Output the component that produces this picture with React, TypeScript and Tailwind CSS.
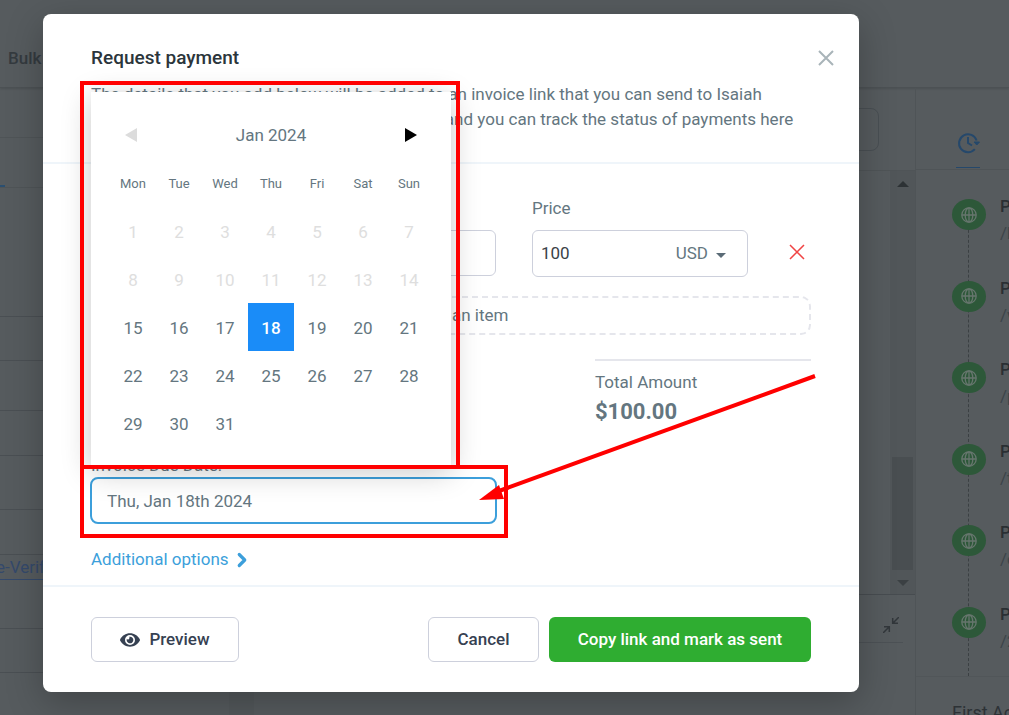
import { ChevronRight, Plus } from "lucide-react";
import { FaEye } from "react-icons/fa";

const weekdays = ["Mon", "Tue", "Wed", "Thu", "Fri", "Sat", "Sun"];
const weeks = [0, 1, 2, 3, 4].map((w) =>
  weekdays.map((_, d) => w * 7 + d + 1).map((day) => (day <= 31 ? day : null))
);
const today = 18;

const visits = ["/b", "/w", "/p", "/t", "/d", "/2"];

function Cross({ className }: { className: string }) {
  return (
    <svg viewBox="0 0 16 16" fill="none" stroke="currentColor" className={className}>
      <path d="M1 1l14 14M15 1L1 15" />
    </svg>
  );
}

function HistoryIcon() {
  return (
    <svg viewBox="0 0 24 24" className="w-6 h-6" fill="none" stroke="currentColor" strokeWidth="2">
      <path d="M18.8 18.2A9 9 0 1 1 20.6 9.5" />
      <path d="M12 6v6l4 2.5" />
      <path d="M18 11h5.5l-2.7 3z" fill="currentColor" strokeWidth="1" />
    </svg>
  );
}

function GlobeIcon() {
  return (
    <svg viewBox="0 0 16 16" className="w-4 h-4" fill="none" stroke="currentColor" strokeWidth="1.3">
      <circle cx="8" cy="8" r="7.2" />
      <ellipse cx="8" cy="8" rx="3.8" ry="7.2" />
      <path d="M8 1v14M1 8h14" />
    </svg>
  );
}

function Sidebar() {
  return (
    <div className="w-[229px] shrink-0 text-[17px]">
      <div className="h-[50px] border-b border-[#4f5457]" />
      <div className="h-[50px] border-b border-[#4f5457] flex items-end">
        <div className="w-[5px] h-0.5 bg-[#2b4f70]" />
      </div>
      <div className="h-[129px] border-b border-[#4a4f53]" />
      <div className="h-11 border-b border-[#4a4f53]" />
      <div className="h-[50px] border-b border-[#4a4f53]" />
      <div className="h-[45px] border-b border-[#4a4f53]" />
      <div className="h-[54px] border-b border-[#4a4f53]" />
      <div className="h-[45px] border-b border-[#4a4f53]" />
      <div className="h-[74px] border-b border-[#4a4f53]">
        <a href="#verify" className="inline-block -ml-1 leading-6 text-[#34496b] border-b border-[#34496b]">
          e-Verify
        </a>
      </div>
      <div className="h-11 border-b border-[#4a4f53]" />
    </div>
  );
}

function Conversation() {
  return (
    <div className="flex-1 flex flex-col">
      <div className="h-[83px] border-b border-[#4f5457] pt-5 pr-9">
        <div className="h-[43px] rounded-lg border border-[#494f53]" />
      </div>
      <div className="h-[424px] flex justify-end border-b border-[#474c50]">
        <div className="w-[25px] bg-[#515659] flex flex-col items-center justify-between pt-[10px] pb-2">
          <svg viewBox="0 0 12 6" className="w-3 h-1.5 fill-[#2d3235]">
            <path d="M0 6l6-6 6 6z" />
          </svg>
          <div className="flex flex-col items-center gap-[10px]">
            <div className="w-[21px] h-[113px] bg-[#494e51]" />
            <svg viewBox="0 0 12 6" className="w-3 h-1.5 fill-[#3b4043]">
              <path d="M0 0h12L6 6z" />
            </svg>
          </div>
        </div>
      </div>
      <div className="h-12 mr-3 pr-1 border-b border-[#4c5155] flex justify-end items-center text-[#32373b]">
        <svg viewBox="0 0 16 16" className="w-4 h-4 mt-3" fill="none" stroke="currentColor" strokeWidth="1.5">
          <path d="M16 0l-6 6M9.7 1v5.3H15M0 16l6-6M1 9.7h5.3V15" />
        </svg>
      </div>
    </div>
  );
}

function Timeline() {
  return (
    <div className="w-[94px] shrink-0 border-l border-[#4f5457]">
      <div className="h-[82px] border-b border-[#4f5457] pl-10 flex flex-col justify-end">
        <div className="w-6 h-[37px] text-[#25486b] border-b border-[#25486b] mb-px">
          <HistoryIcon />
        </div>
      </div>
      <div className="relative h-[507px] pt-[29px] pb-6 border-b border-[#515659]">
        <div className="absolute top-[30px] bottom-0 left-[52px] border-l border-dashed border-[#3b4043]" />
        <ul className="relative h-full flex flex-col justify-between">
          {visits.map((path) => (
            <li key={path} className="h-[45px] pl-9 flex gap-[14px]">
              <span className="w-[34px] h-[31px] shrink-0 rounded-[50%] bg-[#2d5839] flex items-center justify-center text-[#67766e]">
                <GlobeIcon />
              </span>
              <span className="text-[17px] leading-[27px] -mt-1.5">
                <span className="block font-medium text-[#2a2f33]">P</span>
                <span className="block text-[#3c4449]">{path}</span>
              </span>
            </li>
          ))}
        </ul>
      </div>
      <p className="pl-9 pt-6 text-lg leading-6 whitespace-nowrap text-[#2d3236]">First Activity</p>
    </div>
  );
}

function DatePicker() {
  return (
    <div className="absolute left-0 bottom-full mb-[11px] w-[360px] bg-white p-[19px] shadow-[0_6px_28px_rgba(0,0,0,0.22)]">
      <div className="h-12 px-[15px] flex items-center justify-between text-[17px]">
        <button aria-label="Previous month" disabled className="text-[#dcdcdc]">
          <svg viewBox="0 0 12 14" className="w-3 h-3.5 fill-current">
            <path d="M12 0v14L0 7z" />
          </svg>
        </button>
        <span>Jan 2024</span>
        <button aria-label="Next month" className="text-black">
          <svg viewBox="0 0 12 14" className="w-3 h-3.5 fill-current">
            <path d="M0 0v14l12-7z" />
          </svg>
        </button>
      </div>
      <table className="w-full table-fixed border-collapse">
        <thead>
          <tr className="h-12">
            {weekdays.map((name) => (
              <th key={name} className="p-0 text-[13px] font-normal">
                {name}
              </th>
            ))}
          </tr>
        </thead>
        <tbody>
          {weeks.map((week, i) => (
            <tr key={i} className="h-12">
              {week.map((day, d) => (
                <td key={d} className="p-0">
                  {day && (
                    <button
                      disabled={day < today}
                      className={
                        day === today
                          ? "block w-full h-12 pt-0.5 bg-[#1a8cf8] text-white font-medium"
                          : day < 15
                            ? "block w-full h-12 pt-0.5 text-[#dedede]"
                            : "block w-full h-12 pt-0.5"
                      }
                    >
                      {day}
                    </button>
                  )}
                </td>
              ))}
            </tr>
          ))}
        </tbody>
      </table>
    </div>
  );
}

function RequestPayment() {
  return (
    <div
      role="dialog"
      aria-labelledby="dialog-title"
      className="rounded-lg bg-white text-[#647680] text-[17px] leading-[25px] shadow-[0_10px_36px_rgba(0,0,0,0.25)]"
    >
      <div className="px-12 pt-[31px] pb-[30px] border-b-2 border-[#eff5fa]">
        <div className="flex items-center justify-between -mr-[23px]">
          <h1 id="dialog-title" className="text-[19px] font-medium text-[#2b353b]">
            Request payment
          </h1>
          <button aria-label="Close" className="text-[#a9b4b9]">
            <Cross className="w-4 h-4 stroke-2" />
          </button>
        </div>
        <p className="mt-3 whitespace-nowrap">
          The details that you add below will be added to an invoice link that you can send to Isaiah
          <br />
          Jones. The invoice can be shared by message, and you can track the status of payments here
        </p>
      </div>

      <div className="px-12 pt-8 pb-[13px]">
        <div className="flex gap-9">
          <div className="flex-1">
            <label htmlFor="item">Item</label>
            <input
              id="item"
              className="block w-full h-[46px] mt-[9px] px-2 rounded-md border border-[#cdd0dc] outline-none"
            />
          </div>
          <div className="w-[216px]">
            <label htmlFor="price">Price</label>
            <div className="flex items-center h-[47px] mt-[9px] px-2 rounded-md border border-[#cdd0dc]">
              <input id="price" defaultValue="100" className="w-0 flex-1 text-[#3a4247] outline-none" />
              <button className="flex items-center gap-2 pr-[13px]">
                USD
                <svg viewBox="0 0 10 5" className="w-2.5 h-[5px] mt-1 fill-[#5a6b76]">
                  <path d="M0 0h10L5 5z" />
                </svg>
              </button>
            </div>
          </div>
          <button aria-label="Remove item" className="self-end mb-[17px] ml-[5px] mr-1.5 text-[#f04444]">
            <Cross className="w-4 h-4 stroke-[1.5]" />
          </button>
        </div>

        <button className="w-full h-[39px] mt-[19px] rounded-[10px] border-2 border-dashed border-[#e5e6ec] flex items-center justify-center gap-1">
          <Plus className="w-5 h-5" />
          Add an item
        </button>

        <div className="w-[216px] ml-auto mt-6 pt-[9px] border-t-2 border-[#e5e6ec]">
          <p>Total Amount</p>
          <p className="mt-1 text-[22px] font-bold">$100.00</p>
        </div>

        <div className="w-[407px] -ml-px mt-[30px]">
          <label htmlFor="due-date" className="block ml-px leading-[23px]">
            Invoice Due Date:
          </label>
          <div className="relative">
            <input
              id="due-date"
              defaultValue="Thu, Jan 18th 2024"
              className="block w-full h-[47px] px-[15px] rounded-lg border-2 border-[#3c9fdb] outline-none"
            />
            <div className="absolute inset-x-px top-0">
              <DatePicker />
            </div>
          </div>
        </div>

        <a href="#options" className="mt-[23px] flex w-fit items-center gap-0.5 text-[#3c9fdb]">
          Additional options
          <ChevronRight className="w-[22px] h-[22px]" strokeWidth={3.5} />
        </a>
      </div>

      <div className="px-12 py-[30px] flex gap-[10px] border-t-2 border-[#eff5fa] font-medium text-[#364152]">
        <button className="h-[45px] w-[148px] mr-auto rounded-md border border-[#cdd0dc] flex items-center justify-center gap-[9px]">
          <FaEye className="w-5 h-5" />
          Preview
        </button>
        <button className="h-[45px] w-[111px] rounded-md border border-[#cdd0dc]">Cancel</button>
        <button className="h-[45px] w-[262px] rounded-md bg-[#2fad31] text-white">Copy link and mark as sent</button>
      </div>
    </div>
  );
}

export default function App() {
  return (
    <div className="relative h-screen overflow-hidden bg-[#565b5e] font-['Roboto',sans-serif]">
      <header className="h-[88px] pl-2 flex items-center border-b border-[#4c5154] shadow-[0_1px_2px_rgba(0,0,0,0.12)]">
        <span className="mt-[30px] text-[17px] font-medium text-[#343a3f]">Bulk</span>
      </header>
      <div className="flex">
        <Sidebar />
        <div className="w-[25px] shrink-0 bg-[#53585b]" />
        <Conversation />
        <Timeline />
      </div>

      <div className="absolute inset-0 pt-[14px] pl-[43px] pr-[150px]">
        <RequestPayment />
      </div>

      {/* Callouts over the date field */}
      <div className="absolute left-20 top-[81px] w-[380px] h-[388px] border-4 border-[#ff0000] pointer-events-none" />
      <div className="absolute left-20 top-[465px] w-[428px] h-[73px] border-4 border-[#ff0000] pointer-events-none" />
      <svg viewBox="0 0 340 130" className="absolute left-[477px] top-[373px] w-[340px] h-[130px] pointer-events-none">
        <path d="M338 3L22 118" stroke="#ff0000" strokeWidth="4" />
        <path d="M2 127l20-15 5 14z" fill="#ff0000" />
      </svg>
    </div>
  );
}
